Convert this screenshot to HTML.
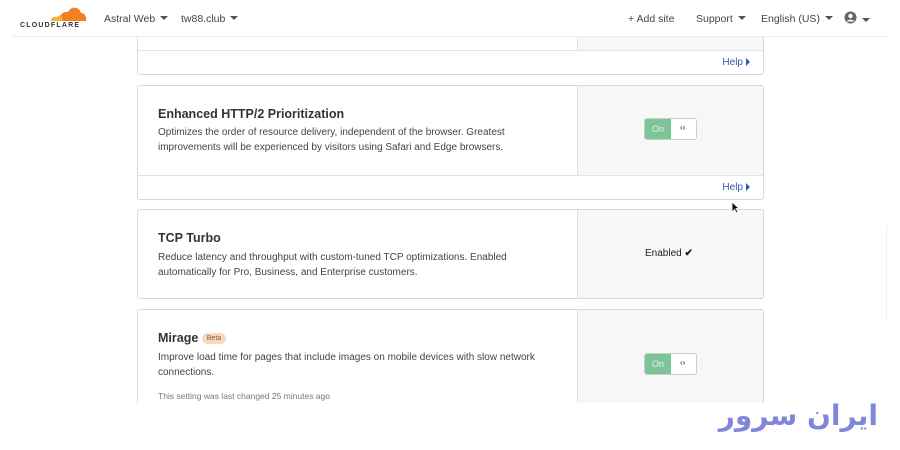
<!DOCTYPE html>
<html><head><meta charset="utf-8"><style>
*{box-sizing:border-box;margin:0;padding:0}
body{width:900px;height:450px;overflow:hidden;background:#fff;font-family:"Liberation Sans",sans-serif;color:#333;position:relative}
.top{position:absolute;left:12px;top:0;width:876px;height:37px;border-bottom:1px solid #eee;background:#fff;z-index:3}
.nav{position:absolute;top:13px;font-size:10.5px;color:#444}
.car{display:inline-block;border-left:4px solid transparent;border-right:4px solid transparent;border-top:4px solid #555;margin-left:5px;vertical-align:2px}
.clip{position:absolute;left:0;top:37px;width:900px;height:366px;overflow:hidden;background:#fff}
.card{position:absolute;left:137px;width:627px;border:1px solid #d9d9d9;border-radius:3px;background:#fff;overflow:hidden}
.right{position:absolute;left:439px;top:0;width:188px;background:#f7f7f7;border-left:1px solid #e0e0e0}
.help{position:absolute;right:13px;font-size:10px;color:#2c5bb0}
.help:after{content:"";display:inline-block;border-top:4px solid transparent;border-bottom:4px solid transparent;border-left:4px solid #2c5bb0;margin-left:3px;vertical-align:-1px}
h3{position:absolute;left:20px;font-size:12.5px;font-weight:bold;color:#333}
.d{position:absolute;left:20px;font-size:10px;line-height:15px;color:#444;width:372px}
.tog{position:absolute;width:53px;height:22px;border:1px solid #ccc;border-radius:3px;background:#fff}
.tog .on{position:absolute;left:0;top:0;width:26px;height:20px;background:#7cc597;color:#e7f5ea;font-size:9px;text-align:center;line-height:20px;border-radius:2px 0 0 2px}
.tog .ar{position:absolute;left:35px;top:4px;font-size:8px;color:#555;font-weight:bold}
.hr{position:absolute;left:0;width:627px;border-top:1px solid #e3e3e3}
</style></head><body>
<div class="top">
<svg style="position:absolute;left:36px;top:5px" width="40" height="18" viewBox="0 0 40 18"><path d="M12 16 C11 10 15 6 20 7 C23 1 31 1 33 8 C37 8 39 12 38 16 Z" fill="#f38020"/><path d="M3 16 C3 13 6 11 9 12 C10 10 13 10 14 12 L15 16Z" fill="#faae40"/></svg>
<div style="position:absolute;left:8px;top:22px;font-size:7px;font-weight:bold;letter-spacing:1.2px;color:#333">CLOUDFLARE</div>
<div class="nav" style="left:92px">Astral Web<span class="car"></span></div>
<div class="nav" style="left:169px">tw88.club<span class="car"></span></div>
<div class="nav" style="left:616px">+ Add site</div>
<div class="nav" style="left:684px">Support<span class="car"></span></div>
<div class="nav" style="left:749px">English (US)<span class="car"></span></div>
<div class="nav" style="left:832px;top:11px"><svg width="13" height="13" viewBox="0 0 13 13"><circle cx="6.5" cy="6.5" r="6" fill="#666"/><circle cx="6.5" cy="5" r="2.2" fill="#fff"/><path d="M2.5 10.5 C4 8 9 8 10.5 10.5" fill="#fff"/></svg><span class="car"></span></div>
</div>
<div class="clip">
<div class="card" style="top:-20px;height:58px"><div class="right" style="height:32px"></div><div class="hr" style="top:32px"></div><div class="help" style="top:39px">Help</div></div>
<div class="card" style="top:48px;height:115px"><div class="right" style="height:89px"></div><div class="hr" style="top:89px"></div>
<h3 style="top:21px">Enhanced HTTP/2 Prioritization</h3>
<div class="d" style="top:39px;width:362px">Optimizes the order of resource delivery, independent of the browser. Greatest improvements will be experienced by visitors using Safari and Edge browsers.</div>
<div class="tog" style="left:506px;top:32px"><div class="on">On</div><div class="ar">‹›</div></div>
<div class="help" style="top:96px">Help</div></div>
<div class="card" style="top:172px;height:90px"><div class="right" style="height:90px"></div>
<h3 style="top:21px">TCP Turbo</h3>
<div class="d" style="top:40px;width:362px">Reduce latency and throughput with custom-tuned TCP optimizations. Enabled automatically for Pro, Business, and Enterprise customers.</div>
<div style="position:absolute;left:507px;top:38px;font-size:10px;color:#222">Enabled <b>✔</b></div></div>
<div class="card" style="top:272px;height:110px"><div class="right" style="height:110px"></div>
<h3 style="top:21px">Mirage <span style="font-size:7px;font-weight:normal;background:#f9d9bd;color:#8a5a2c;padding:2px 5px;border-radius:8px;vertical-align:2px">Beta</span></h3>
<div class="d" style="top:40px;width:390px">Improve load time for pages that include images on mobile devices with slow network connections.</div>
<div style="position:absolute;left:20px;top:81px;font-size:8.5px;color:#777">This setting was last changed 25 minutes ago</div>
<div class="tog" style="left:506px;top:43px"><div class="on">On</div><div class="ar">‹›</div></div></div>
</div>
<div style="position:absolute;left:886px;top:225px;width:1px;height:95px;background:#eee"></div>
<svg style="position:absolute;left:731px;top:201px" width="9" height="13" viewBox="0 0 9 13"><path d="M1 1 L1 11 L3.5 8.5 L5.5 12 L7 11 L5 7.5 L8 7.5 Z" fill="#111" stroke="#fff" stroke-width="0.8"/></svg>
<div style="position:absolute;right:22px;top:396px;font-size:28px;line-height:40px;font-weight:bold;color:#7f86dc;font-family:'DejaVu Sans',sans-serif;direction:rtl;white-space:nowrap">ایران سرور</div>
</body></html>
